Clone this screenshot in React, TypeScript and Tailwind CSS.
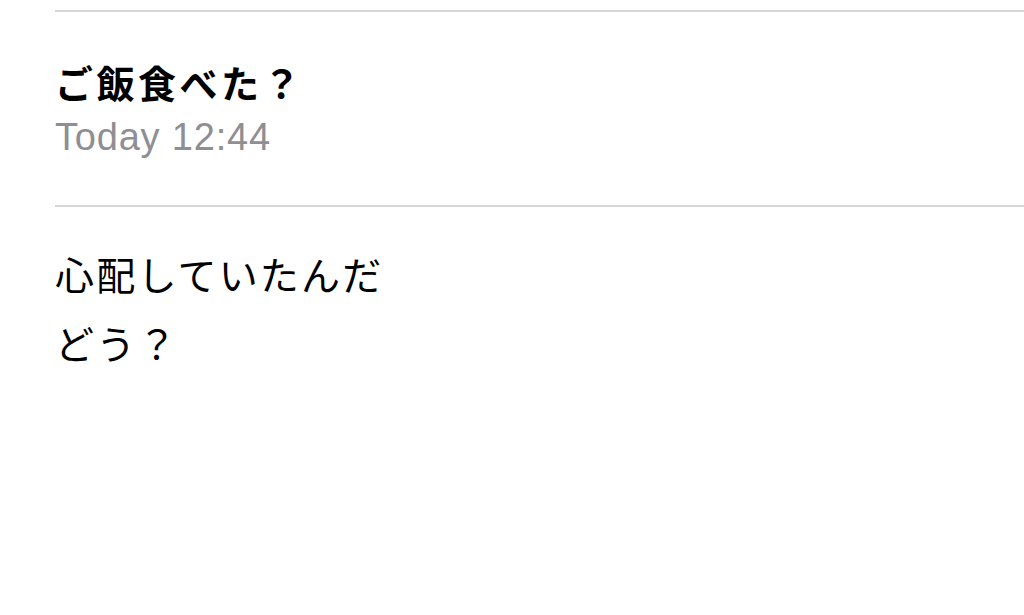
import React from "react";

const jp = "font-['Liberation_Sans','Noto_Sans_CJK_JP',sans-serif]";

export default function App() {
  return (
    <div className={`w-[1024px] h-[615px] bg-white overflow-hidden pl-[55px] pt-[10px] ${jp}`}>
      {/* header */}
      <div className="border-t-[2px] border-[#d6d6d6]" />
      <div className="pt-[49px] pb-[46px]">
        <h1 className="text-[38px] leading-[48px] font-bold text-black tracking-[3.5px]">ご飯食べた？</h1>
        <p className="mt-[6px] text-[38px] leading-[44px] text-[#8e8e93] tracking-[0.8px]">Today 12:44</p>
      </div>
      <div className="border-t-[2px] border-[#d6d6d6]" />

      {/* message body */}
      <div className="pt-[35px] text-[39px] leading-[69px] text-black tracking-[2.2px]">
        <p>心配していたんだ</p>
        <p>どう？</p>
      </div>
    </div>
  );
}
